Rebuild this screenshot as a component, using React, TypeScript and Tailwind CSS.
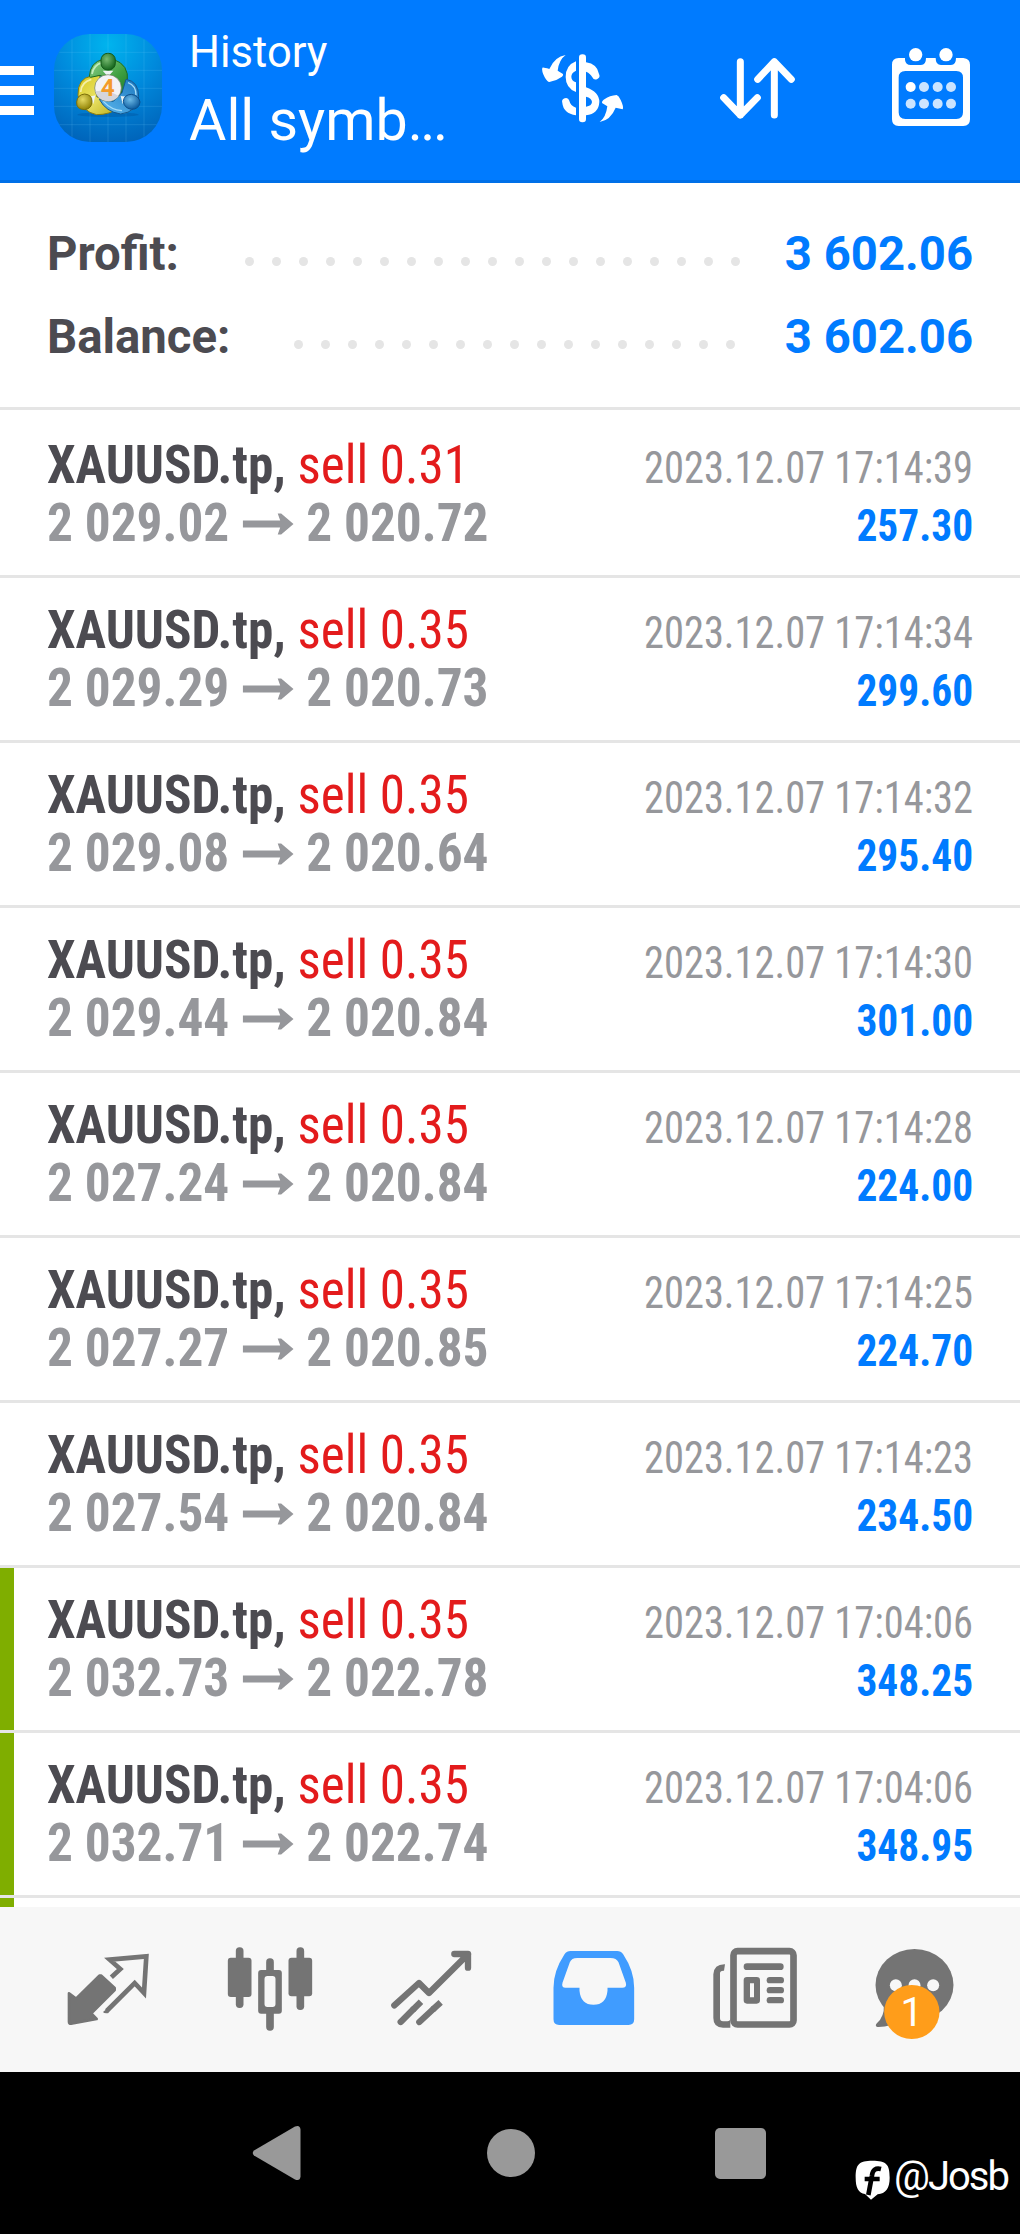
// MetaTrader 4 account history screen

interface Deal {
  symbol: string;
  volume: string;
  open: string;
  close: string;
  time: string;
  profit: string;
  marked?: boolean;
}

const deals: Deal[] = [
  { symbol: "XAUUSD.tp", volume: "0.31", open: "2 029.02", close: "2 020.72", time: "2023.12.07 17:14:39", profit: "257.30" },
  { symbol: "XAUUSD.tp", volume: "0.35", open: "2 029.29", close: "2 020.73", time: "2023.12.07 17:14:34", profit: "299.60" },
  { symbol: "XAUUSD.tp", volume: "0.35", open: "2 029.08", close: "2 020.64", time: "2023.12.07 17:14:32", profit: "295.40" },
  { symbol: "XAUUSD.tp", volume: "0.35", open: "2 029.44", close: "2 020.84", time: "2023.12.07 17:14:30", profit: "301.00" },
  { symbol: "XAUUSD.tp", volume: "0.35", open: "2 027.24", close: "2 020.84", time: "2023.12.07 17:14:28", profit: "224.00" },
  { symbol: "XAUUSD.tp", volume: "0.35", open: "2 027.27", close: "2 020.85", time: "2023.12.07 17:14:25", profit: "224.70" },
  { symbol: "XAUUSD.tp", volume: "0.35", open: "2 027.54", close: "2 020.84", time: "2023.12.07 17:14:23", profit: "234.50" },
  { symbol: "XAUUSD.tp", volume: "0.35", open: "2 032.73", close: "2 022.78", time: "2023.12.07 17:04:06", profit: "348.25", marked: true },
  { symbol: "XAUUSD.tp", volume: "0.35", open: "2 032.71", close: "2 022.74", time: "2023.12.07 17:04:06", profit: "348.95", marked: true },
];

const AppLogo = () => (
  <svg className="ml-5 mt-[34px] h-[108px] w-[108px] shrink-0" viewBox="12 12 324 324">
    <defs>
      <radialGradient id="tile" cx="0.5" cy="0.1" r="0.95">
        <stop offset="0" stopColor="#00b4ee" />
        <stop offset="0.5" stopColor="#0089dc" />
        <stop offset="1" stopColor="#0062b8" />
      </radialGradient>
      <linearGradient id="green" x1="0" y1="0" x2="1" y2="1">
        <stop offset="0" stopColor="#8fd08c" />
        <stop offset="0.6" stopColor="#3fa041" />
        <stop offset="1" stopColor="#1f7a2c" />
      </linearGradient>
      <linearGradient id="yellow" x1="0" y1="0" x2="1" y2="1">
        <stop offset="0" stopColor="#d8c91e" />
        <stop offset="0.5" stopColor="#e9e264" />
        <stop offset="1" stopColor="#b9ab17" />
      </linearGradient>
      <linearGradient id="blue" x1="1" y1="0" x2="0" y2="1">
        <stop offset="0" stopColor="#1c78c0" />
        <stop offset="1" stopColor="#5cb8ee" />
      </linearGradient>
      <radialGradient id="greenHead" cx="0.4" cy="0.35" r="0.65">
        <stop offset="0" stopColor="#78bb72" />
        <stop offset="1" stopColor="#17681e" />
      </radialGradient>
      <radialGradient id="yellowHead" cx="0.4" cy="0.35" r="0.65">
        <stop offset="0" stopColor="#e6da62" />
        <stop offset="1" stopColor="#938508" />
      </radialGradient>
      <radialGradient id="blueHead" cx="0.4" cy="0.35" r="0.65">
        <stop offset="0" stopColor="#6dbbe8" />
        <stop offset="1" stopColor="#0e5c9f" />
      </radialGradient>
    </defs>
    <rect x="12" y="12" width="324" height="324" rx="108" fill="url(#tile)" />
    <path
      d="M28 67H320M12 121H336M12 175H336M12 229H336M28 284H320M66 28V320M120 12V336M174 12V336M228 12V336M282 28V320"
      stroke="#7fd4ff"
      strokeOpacity="0.16"
      strokeWidth="3"
    />
    <ellipse cx="174" cy="254" rx="92" ry="7" fill="#003d80" opacity="0.25" />
    {/* three figures around the badge */}
    <path d="M84 196Q82 146 124 138L150 136L140 200L206 234Q180 254 140 254Q96 246 84 196Z" fill="url(#yellow)" stroke="#8b7c0c" strokeWidth="3" />
    <path d="M92 186Q94 156 124 148" fill="none" stroke="#f5f0a8" strokeWidth="5" />
    <path d="M118 140Q120 96 160 88H190Q238 104 232 154Q228 180 208 192L200 160L150 136L122 142Z" fill="url(#green)" stroke="#1c6b22" strokeWidth="3" />
    <path d="M126 132Q130 106 156 98" fill="none" stroke="#c4ecbd" strokeWidth="5" />
    <path d="M228 148Q266 154 266 200Q262 246 212 252Q168 246 148 208L190 214L216 188Z" fill="url(#blue)" stroke="#14588f" strokeWidth="3" />
    <path d="M234 158Q258 166 258 196M160 214Q184 240 216 242" fill="none" stroke="#a5dcf8" strokeWidth="4" />
    <path d="M158 122H190L174 140ZM118 200L136 196L130 222ZM212 198L230 200L218 222Z" fill="#eef4f4" />
    <rect x="153" y="70" width="43" height="50" rx="20" fill="url(#greenHead)" stroke="#145a1a" strokeWidth="3" />
    <path d="M80 216Q82 194 104 192Q126 194 126 214Q126 236 104 239Q78 238 80 216Z" fill="url(#yellowHead)" stroke="#7b6e08" strokeWidth="3" />
    <path d="M220 214Q222 194 244 193Q266 196 270 216Q268 238 244 238Q222 234 220 214Z" fill="url(#blueHead)" stroke="#0d4f8b" strokeWidth="3" />
    <circle cx="174" cy="174" r="40" fill="#f3f2f5" stroke="#6c7a5c" strokeWidth="2" />
    <path d="M136 184Q174 178 206 198A40 40 0 0 1 136 184Z" fill="#d5d5dc" />
    <text x="173" y="199" textAnchor="middle" fontSize="73" fontWeight="700" className="font-stretch-90%" fill="#f49b2a">
      4
    </text>
  </svg>
);

const Header = () => (
  <header className="flex h-[183px] shrink-0 border-b-[3px] border-[#0070e8] bg-[#007bff] text-white">
    <div className="mt-[66px] flex w-[34px] shrink-0 flex-col gap-[11px]">
      <span className="h-[9px] bg-white" />
      <span className="h-[9px] bg-white" />
      <span className="h-[9px] bg-white" />
    </div>
    <AppLogo />
    <div className="ml-[27px] w-[351px] pt-[25px]">
      <div className="origin-left scale-x-[0.967] text-[45px] leading-[53px]">History</div>
      <div className="origin-left scale-x-[1.006] text-[57px] leading-[85px]">
        All symb<span className="tracking-[-2.5px]">...</span>
      </div>
    </div>

    {/* currency */}
    <svg className="h-[180px] w-[85px] shrink-0" viewBox="90 0 255 540" fill="#fff">
      <rect x="207" y="163" width="21" height="204" rx="10" />
      <path d="M198 184V212Q184 218 184 230Q184 242 198 247V276Q167 264 167 231Q167 196 198 184Z" />
      <path d="M228 187Q262 192 267 222A11 11 0 0 1 247 232Q242 221 228 215Z" />
      <path d="M228 262Q268 276 268 306Q266 342 228 346V320Q245 318 246 306Q245 294 228 290Z" />
      <path d="M157 309A11 11 0 0 1 178 302Q181 317 198 323V346Q160 340 157 309Z" />
      <path d="M167 165Q147 179 143 212L159 222Q161 226 156 230Q140 242 118 246Q112 246 104 232Q94 212 97 203Q99 201 118 207Q134 170 167 165Z" />
      <path d="M269 366Q288 352 292 319L276 309Q275 303 281 299Q300 286 320 285Q326 287 332 300Q342 321 338 328L317 323Q302 360 269 366Z" />
    </svg>

    {/* sort */}
    <svg
      className="ml-[94px] h-[180px] w-[77px] shrink-0"
      viewBox="627 0 231 540"
      fill="none"
      stroke="#fff"
      strokeWidth="21"
      strokeLinecap="round"
      strokeLinejoin="round"
    >
      <path d="M691 185V345M641 293L691 345L742 293" />
      <path d="M793 345V185M743 238L793 185L844 238" />
    </svg>

    {/* period */}
    <svg className="ml-[94px] h-[180px] w-[82px] shrink-0" viewBox="1140 0 246 540" fill="#fff">
      <path
        fillRule="evenodd"
        d="M1166 174H1185V180Q1187 195 1202 195H1233Q1248 195 1248 174H1277Q1277 195 1293 195H1323Q1338 195 1338 174H1360Q1380 176 1380 194V358Q1380 378 1360 378H1166Q1146 378 1146 358V194Q1146 174 1166 174ZM1186 213Q1166 213 1166 233V337Q1166 357 1186 357H1339Q1359 357 1359 337V233Q1359 213 1339 213Z"
      />
      <circle cx="1217" cy="164" r="20" />
      <circle cx="1308" cy="164" r="20" />
      {[1202, 1242, 1283, 1323].map((x, i) => (
        <g key={x}>
          <circle cx={x} cy="261" r="15" opacity={i === 0 ? 1 : 0.8} />
          <circle cx={x} cy="311" r="15" opacity="0.8" />
        </g>
      ))}
    </svg>
  </header>
);

const SummaryRow = ({ label, value, dots, offset }: { label: string; value: string; dots: number; offset: string }) => (
  <div className="flex h-[83px] items-center text-[48px] leading-[83px] font-bold">
    <span className={`${offset} shrink-0 origin-left scale-x-[0.985] text-[#4c4b51]`}>{label}</span>
    <div className="flex gap-[18px] pt-[15px]">
      {Array.from({ length: dots }).map((_, i) => (
        <span key={i} className="h-[9px] w-[9px] rounded-full bg-[#e5e5e5]" />
      ))}
    </div>
    <span className="ml-auto origin-right scale-x-[0.985] text-[#007bff]">{value}</span>
  </div>
);

const DealRow = ({ symbol, volume, open, close, time, profit, marked }: Deal) => (
  <div className="flex h-[165px] shrink-0 border-b-[3px] border-[#e5e5e5] font-stretch-condensed">
    <div className={`w-[13.5px] shrink-0 ${marked ? "bg-[#7fae00]" : ""}`} />
    <div className="flex flex-1 justify-between pr-[47px] pl-[33px]">
      <div className="pt-[22.5px] text-[54px] leading-[58px]">
        <div className="origin-left scale-x-[0.946] whitespace-nowrap">
          <span className="font-bold text-[#4c4b51]">{symbol},</span>{" "}
          <span className="text-[#e31b1c]">sell {volume}</span>
        </div>
        <div className="flex origin-left scale-x-[0.95] font-bold whitespace-nowrap text-[#96979b]">
          {open}
          <svg className="mt-[19px] mr-[12.5px] ml-[14.5px] h-[22px] w-[54px]" viewBox="0 0 52 22" preserveAspectRatio="none" fill="currentColor">
            <path d="M0 7.5H38L35.5 0.5H39L51.5 11L39 21.5H35.5L38 14.5H0Z" />
          </svg>
          {close}
        </div>
      </div>
      <div className="pt-[26px] text-right text-[45px] leading-[58px] whitespace-nowrap">
        <div className="origin-right scale-x-[0.899] text-[#96979b]">{time}</div>
        <div className="origin-right scale-x-[0.92] font-bold text-[#007bff]">{profit}</div>
      </div>
    </div>
  </div>
);

const TabBar = () => (
  <nav className="flex h-[165px] shrink-0 bg-[#f7f7f7] pr-6 pl-[27px] text-[#747474]">
    {/* quotes */}
    <svg className="h-full flex-1" viewBox="81 51 484.5 495">
      <path
        d="M207 310L228 326L298 257H304L344 294V300L274 370L290 387L213 401Q207 401 207 395Z"
        fill="currentColor"
        stroke="currentColor"
        strokeWidth="8"
        strokeLinejoin="round"
      />
      <path d="M334 262L361 237L329 209L439 199L432 309L404 279L320 363" fill="none" stroke="currentColor" strokeWidth="14" />
      <path d="M320 357L309 366Q312 371 326 369Z" fill="currentColor" />
    </svg>

    {/* chart */}
    <svg className="h-full flex-1" viewBox="565.5 51 484.5 495" fill="currentColor">
      <rect x="706" y="172" width="23" height="182" rx="11" />
      <rect x="682" y="203" width="71" height="118" rx="9" />
      <rect x="888" y="172" width="23" height="188" rx="11" />
      <rect x="864" y="203" width="71" height="116" rx="9" />
      <rect x="797" y="205" width="23" height="50" rx="11" />
      <rect x="797" y="355" width="23" height="67" rx="11" />
      <path
        fillRule="evenodd"
        d="M782 240H835Q844 240 844 249V362Q844 371 835 371H782Q773 371 773 362V249Q773 240 782 240ZM801 258Q792 258 792 267V342Q792 351 801 351H816Q825 351 825 342V267Q825 258 816 258Z"
      />
    </svg>

    {/* trade */}
    <svg
      className="h-full flex-1"
      viewBox="1050 51 484.5 495"
      fill="none"
      stroke="currentColor"
      strokeWidth="19"
      strokeLinecap="round"
      strokeLinejoin="round"
    >
      <path d="M1183 346L1257 279L1287 309L1404 193M1363 192H1404V233" />
      <path d="M1202 396L1240 358M1258 396L1300 357" />
      <path d="M1238 360L1263 335M1298 359L1322 337" strokeLinecap="butt" />
    </svg>

    {/* history */}
    <svg className="h-full flex-1 text-[#409cff]" viewBox="4.5 51 484.5 495" fill="currentColor">
      <path
        fillRule="evenodd"
        d="M180 183H320Q331 183 338 193Q371 243 371 293V388Q371 405 354 405H146Q129 405 129 388V293Q129 243 162 193Q169 183 180 183ZM200 204Q183 204 178 217L156 278Q152 293 165 293H207V302Q211 344 249 344Q287 344 291 302V293H335Q350 293 346 278L324 217Q318 204 300 204Z"
      />
    </svg>

    {/* news */}
    <svg className="h-full flex-1" viewBox="489 51 484.5 495" fill="currentColor">
      <rect x="670.5" y="183.5" width="180" height="220" rx="12" fill="none" stroke="currentColor" strokeWidth="20" />
      <path d="M645 223L642 242Q630 241 630 250V385Q630 394 639 394H652Q661 394 661 385V413H639Q610 413 610 384V253Q612 222 645 223Z" />
      <rect x="701" y="220" width="120" height="20" rx="10" />
      <rect x="770" y="261" width="52" height="19" rx="9.5" />
      <rect x="770" y="291" width="52" height="19" rx="9.5" />
      <rect x="770" y="321" width="52" height="19" rx="9.5" />
      <path fillRule="evenodd" d="M711 261H740Q750 261 750 271V331Q750 341 740 341H711Q701 341 701 331V271Q701 261 711 261ZM720 280V322H732V280Z" />
    </svg>

    {/* messages */}
    <svg className="h-full flex-1" viewBox="973.5 51 484.5 495" fill="currentColor">
      <ellipse cx="1212" cy="285" rx="117" ry="108" />
      <path d="M1120 345Q1122 380 1099 400Q1092 409 1101 411Q1140 412 1180 388Z" />
      <circle cx="1156" cy="286" r="18" fill="#f7f7f7" />
      <circle cx="1212" cy="286" r="18" fill="#f7f7f7" />
      <circle cx="1268" cy="286" r="18" fill="#f7f7f7" />
      <ellipse cx="1204" cy="366" rx="83" ry="81" fill="#ff9d1a" />
      <text x="1204" y="408" textAnchor="middle" fontSize="120" fill="#fff">
        1
      </text>
    </svg>
  </nav>
);

const SystemBar = () => (
  <footer className="flex h-[162px] shrink-0 items-center bg-black text-[#999]">
    <svg className="ml-[252px] h-14 w-[50px]" viewBox="0 0 50 56" fill="currentColor">
      <path d="M2 25.5L43 1.5Q48 -0.5 48.5 4.5V51.5Q48 56.5 43 54.5L2 30.5Q-0.5 28 2 25.5Z" />
    </svg>
    <div className="ml-[184.5px] h-12 w-12 rounded-full bg-[#999]" />
    <div className="ml-[180.5px] h-[51px] w-[51px] rounded-[5px] bg-[#999]" />
    <div className="mt-[54px] ml-[89px] flex items-center text-white">
      <svg className="h-10 w-[35px]" viewBox="0 0 105 120">
        <path d="M52 2C94 2 104 12 104 53C104 86 92 100 68 103L48 119L30 102C10 98 2 84 2 53C2 12 12 2 52 2Z" fill="#fff" />
        <path d="M78 27Q54 21 51 46L40 105M29 57H74" fill="none" stroke="#000" strokeWidth="14" />
      </svg>
      <span className="ml-1 pb-[7px] text-[40px] leading-[48px] tracking-[-2px]">@Josb</span>
    </div>
  </footer>
);

export default function App() {
  return (
    <div className="flex h-[2234px] w-[1020px] flex-col overflow-hidden bg-white font-['Roboto',sans-serif]">
      <Header />
      <section className="h-[227px] shrink-0 border-b-[3px] border-[#e5e5e5] pt-[29px] pr-[47px] pl-[47px]">
        <SummaryRow label="Profit:" value="3 602.06" dots={19} offset="w-[198px]" />
        <SummaryRow label="Balance:" value="3 602.06" dots={17} offset="w-[247px]" />
      </section>
      <main className="flex h-[1497px] shrink-0 flex-col overflow-hidden pt-[3px]">
        {deals.map((deal, i) => (
          <DealRow key={i} {...deal} />
        ))}
        <div className="h-[9px] w-[13.5px] bg-[#7fae00]" />
      </main>
      <TabBar />
      <SystemBar />
    </div>
  );
}
